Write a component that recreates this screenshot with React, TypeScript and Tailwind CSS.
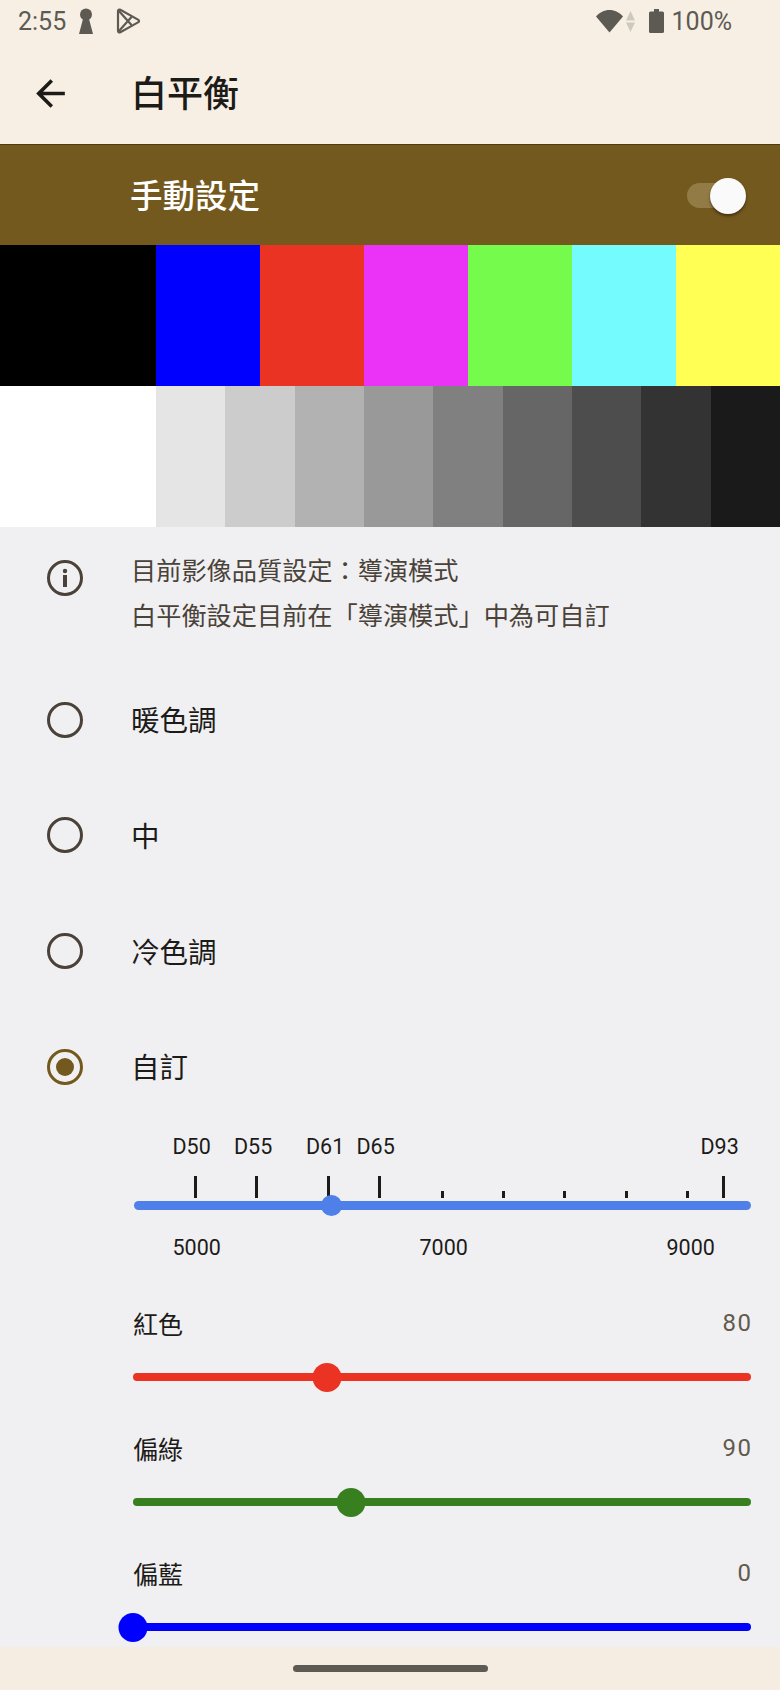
import React from 'react';

const colorBars = [
  { color: 'bg-[#000000]', width: 'w-[156px]' },
  { color: 'bg-[#0000ff]', width: 'flex-1' },
  { color: 'bg-[#eb3324]', width: 'flex-1' },
  { color: 'bg-[#ea33f7]', width: 'flex-1' },
  { color: 'bg-[#75fb4c]', width: 'flex-1' },
  { color: 'bg-[#73fbfd]', width: 'flex-1' },
  { color: 'bg-[#ffff54]', width: 'flex-1' },
];

const grayBars = [
  'bg-[#e5e5e5]',
  'bg-[#cccccc]',
  'bg-[#b2b2b2]',
  'bg-[#999999]',
  'bg-[#808080]',
  'bg-[#666666]',
  'bg-[#4d4d4d]',
  'bg-[#333333]',
  'bg-[#1a1a1a]',
];

const presetLabels = [
  { text: 'D50', left: 172.5 },
  { text: 'D55', left: 234 },
  { text: 'D61', left: 306 },
  { text: 'D65', left: 356.5 },
  { text: 'D93', left: 700.5 },
];

const ticks = [
  { x: 195, long: true },
  { x: 256, long: true },
  { x: 328, long: true },
  { x: 379, long: true },
  { x: 442, long: false },
  { x: 503, long: false },
  { x: 564, long: false },
  { x: 626, long: false },
  { x: 687, long: false },
  { x: 723, long: true },
];

const kelvinLabels = [
  { text: '5000', left: 172.5 },
  { text: '7000', left: 419.5 },
  { text: '9000', left: 666.5 },
];

const Radio = ({ label, checked }: { label: string; checked?: boolean }) => (
  <div className="flex h-[115.67px] items-center">
    <div className="flex w-[131px] shrink-0 justify-center pr-[2px]">
      <div
        className={`flex h-9 w-9 items-center justify-center rounded-full border-[3px] ${
          checked ? 'border-[#74591e]' : 'border-[#4a4238]'
        }`}
      >
        {checked && <div className="h-[18px] w-[18px] rounded-full bg-[#74591e]" />}
      </div>
    </div>
    <span className="pt-[5px] text-[28.5px] leading-9 text-[#1c1b18]">{label}</span>
  </div>
);

const ColorSlider = ({
  label,
  value,
  track,
}: {
  label: string;
  value: number;
  track: string;
}) => (
  <div className="h-[125px] pl-[133px] pr-[29px]">
    <div className="flex h-9 items-center justify-between">
      <span className="translate-y-[1px] text-[25px] text-[#1c1b18]">{label}</span>
      <span className="mr-[-1.5px] -translate-y-[2px] text-[24px] tracking-[1.5px] text-[#625a4b]">{value}</span>
    </div>
    <div className="relative mt-[20px] flex h-[29px] items-center">
      <div className={`h-[8px] w-full rounded-full ${track}`} />
      <div
        className={`absolute h-[29px] w-[29px] -translate-x-1/2 rounded-full ${track}`}
        style={{ left: `${(value / 255) * 100}%` }}
      />
    </div>
  </div>
);

const App: React.FC = () => {
  return (
    <div className="flex h-[1690px] w-[780px] flex-col overflow-hidden bg-[#f0f0f3] font-[Roboto,'Noto_Sans_CJK_TC',sans-serif]">
      <header className="h-[145px] shrink-0 border-b border-[#4d3a10] bg-[#f7efe4]">
        <div className="flex h-[42px] items-center justify-between pl-[18px] pr-[48px] text-[#5d5a53]">
          <div className="flex items-center">
            <span className="text-[25px] leading-none">2:55</span>
            <svg className="ml-[13px] h-[26px] w-[14px]" viewBox="0 0 14 26" fill="#5d5a53">
              <circle cx="7" cy="6.500" r="6" />
              <path d="M4.500 9h5L14 26H0z" />
            </svg>
            <svg className="ml-[23px] h-[26px] w-[24px]" viewBox="0 0 24 26" fill="none" stroke="#5d5a53" strokeWidth="2.2" strokeLinejoin="round">
              <path d="M2 3.200c0-1.300 1.200-2 2.300-1.400L22 11.600c1.300.7 1.300 2.100 0 2.800L4.300 24.200C3.200 24.800 2 24.100 2 22.800z" />
              <path d="M2.500 2.500 15.500 17M2.500 23.500 15.500 9" />
            </svg>
          </div>
          <div className="flex items-center">
            <svg className="h-[24px] w-[27px]" viewBox="0 0 27 24" fill="#5d5a53">
              <path d="M13.500 23.500 0 7.500C3.500 3.500 8.200 1 13.500 1S23.500 3.500 27 7.500z" />
            </svg>
            <svg className="ml-[3px] h-[23px] w-[9px]" viewBox="0 0 9 23" fill="#cfc9bd">
              <path d="M4.500 1 9 10.500H0zM0 12.500h9L4.500 22z" />
            </svg>
            <svg className="ml-[14px] h-[24px] w-[15px]" viewBox="0 0 15 24" fill="#5d5a53">
              <path d="M5 0h5v2.500h3.500a1.500 1.500 0 0 1 1.500 1.500v18.500a1.500 1.500 0 0 1-1.500 1.500h-12A1.500 1.500 0 0 1 0 22.500V4a1.500 1.500 0 0 1 1.500-1.500H5z" />
            </svg>
            <span className="ml-[8px] text-[25px] leading-none">100%</span>
          </div>
        </div>
        <div className="flex h-[102px] items-center">
          <div className="flex w-[131px] justify-start pl-[29px]">
            <svg className="h-[43px] w-[43px]" viewBox="0 0 24 24" fill="#1c1b18">
              <path d="M20 11H7.830l5.590-5.590L12 4l-8 8 8 8 1.410-1.410L7.830 13H20v-2z" />
            </svg>
          </div>
          <h1 className="pt-[4px] text-[36px] font-medium leading-none text-[#1c1b18]">白平衡</h1>
        </div>
      </header>

      <div className="flex h-[100px] shrink-0 items-center justify-between bg-[#74591e] pl-[130px] pr-[37px]">
        <span className="pt-[4px] text-[32.5px] font-medium text-white">手動設定</span>
        <div className="relative h-[25px] w-[56px] rounded-full bg-[#927b45]">
          <div className="absolute right-[-3px] top-[-5px] h-9 w-9 rounded-full bg-[#fafafa] shadow-[0_2px_3px_rgba(0,0,0,0.45)]" />
        </div>
      </div>

      <div className="flex h-[141px] shrink-0">
        {colorBars.map((bar) => (
          <div key={bar.color} className={`${bar.color} ${bar.width}`} />
        ))}
      </div>
      <div className="flex h-[141px] shrink-0">
        <div className="w-[156px] bg-white" />
        {grayBars.map((gray) => (
          <div key={gray} className={`flex-1 ${gray}`} />
        ))}
      </div>

      <main className="min-h-0 flex-1 overflow-hidden">
        <div className="flex h-[135px] pt-[22px]">
          <div className="flex w-[131px] shrink-0 justify-center pr-[2px] pt-[11px]">
            <svg className="h-9 w-9" viewBox="0 0 36 36" fill="none">
              <circle cx="18" cy="18" r="16.500" stroke="#4a4238" strokeWidth="3" />
              <circle cx="18" cy="11" r="2.200" fill="#4a4238" />
              <rect x="16" y="15" width="4" height="12" fill="#4a4238" />
            </svg>
          </div>
          <div className="text-[25.2px] leading-[45px] text-[#4a4238]">
            <p>目前影像品質設定：導演模式</p>
            <p>白平衡設定目前在「導演模式」中為可自訂</p>
          </div>
        </div>

        <Radio label="暖色調" />
        <Radio label="中" />
        <Radio label="冷色調" />
        <Radio label="自訂" checked />

        <div className="h-[182px] pt-[7px] text-[21.5px] leading-[30px] text-[#1c1b18]">
          <div className="relative h-[30px]">
            {presetLabels.map((item) => (
              <span key={item.text} className="absolute" style={{ left: item.left }}>
                {item.text}
              </span>
            ))}
          </div>
          <div className="relative mt-[14px] h-[22px]">
            {ticks.map((tick) => (
              <div
                key={tick.x}
                className={`absolute bottom-0 w-[3px] bg-[#1c1b18] ${tick.long ? 'h-[22px]' : 'h-[7px]'}`}
                style={{ left: tick.x - 1.5 }}
              />
            ))}
          </div>
          <div className="relative ml-[134px] mr-[29px] mt-[3px] h-[9px] rounded-full bg-[#4f7fe8]">
            <div className="absolute left-[187px] top-[-6px] h-[21px] w-[21px] rounded-full bg-[#4f7fe8]" />
          </div>
          <div className="relative mt-[23px] h-[30px]">
            {kelvinLabels.map((item) => (
              <span key={item.text} className="absolute" style={{ left: item.left }}>
                {item.text}
              </span>
            ))}
          </div>
        </div>

        <ColorSlider label="紅色" value={80} track="bg-[#eb3324]" />
        <ColorSlider label="偏綠" value={90} track="bg-[#38801f]" />
        <ColorSlider label="偏藍" value={0} track="bg-[#0000ff]" />
      </main>

      <footer className="flex h-[43px] shrink-0 items-center justify-center bg-[#f5ede1]">
        <div className="h-[7px] w-[195px] rounded-full bg-[#5d5a53]" />
      </footer>
    </div>
  );
};

export default App;
